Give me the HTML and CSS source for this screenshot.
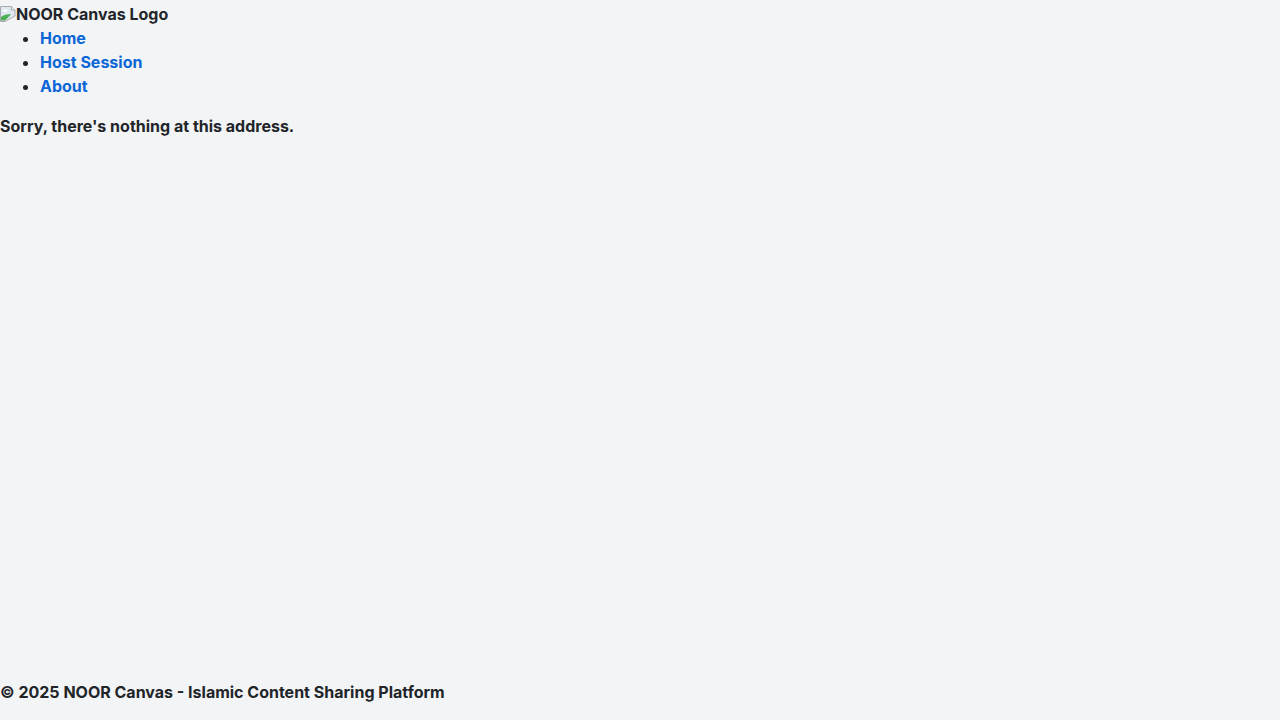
FILE: index.html
```html
<!DOCTYPE html>
<html lang="en">
<head>
<meta charset="utf-8">
<title>NOOR Canvas</title>
<link rel="stylesheet" href="styles.css">
</head>
<body>
<div class="page">
  <header class="site-header">
    <div class="logo">
      <svg class="broken-img" width="16" height="16" viewBox="0 0 16 16" aria-hidden="true">
        <path d="M0.5 0.5h11l3.5 3.5v6L5 15.5H0.5z" fill="#dfe8f0" stroke="#a8acb0" stroke-width="1"/>
        <path d="M11.5 0.5v3.5H15" fill="#f4f4f4" stroke="#a8acb0" stroke-width="1"/>
        <ellipse cx="5" cy="4.5" rx="2.5" ry="1.3" fill="#ffffff"/>
        <path d="M1 14.5V11c3-2 6-3 10-2.5L5 14.5z" fill="#4caf50"/>
        <path d="M1 15h4" stroke="#a8acb0" stroke-width="1"/>
      </svg><span class="logo-alt">NOOR Canvas Logo</span>
    </div>
    <ul class="nav">
      <li><a href="#">Home</a></li>
      <li><a href="#">Host Session</a></li>
      <li><a href="#">About</a></li>
    </ul>
  </header>
  <main class="content">
    <p class="message">Sorry, there's nothing at this address.</p>
  </main>
  <footer class="site-footer">
    <p class="copy">© 2025 NOOR Canvas - Islamic Content Sharing Platform</p>
  </footer>
</div>
</body>
</html>
```
FILE: styles.css
```css
html, body {
  margin: 0;
  padding: 0;
  height: 100%;
}
body {
  background: #f3f4f6;
  color: #212529;
  font-family: Inter, "Noto Sans", sans-serif;
  font-size: 16px;
  font-weight: 700;
  line-height: 24px;
}
.page {
  min-height: 100vh;
  display: flex;
  flex-direction: column;
}
.site-header {
  padding-top: 2px;
}
.logo {
  display: flex;
  align-items: center;
  height: 24px;
}
.broken-img {
  display: block;
  flex: none;
}
.nav {
  margin: 0 0 16px;
  padding-left: 40px;
}
.nav a {
  color: #0b66d6;
  text-decoration: none;
}
.content {
  flex: 1;
}
.message {
  margin: 0;
}
.site-footer {
  padding-bottom: 16px;
}
.copy {
  margin: 0;
}
```
